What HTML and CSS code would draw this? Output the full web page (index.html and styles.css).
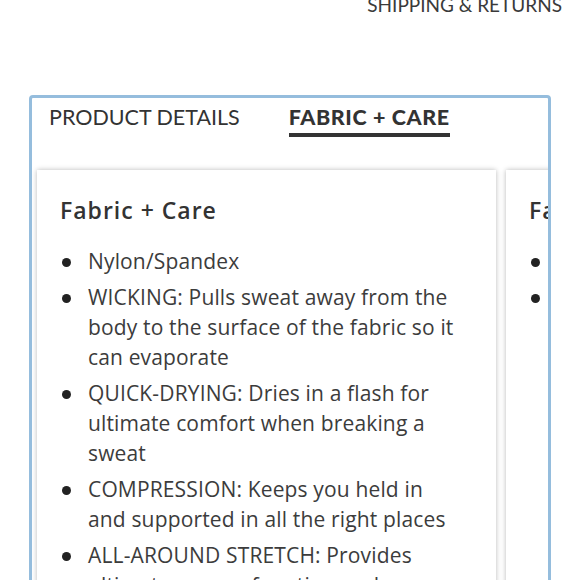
FILE: index.html
```html
<!DOCTYPE html>
<html>
<head>
<meta charset="utf-8">
<link rel="stylesheet" href="styles.css">
</head>
<body>
<div class="top"><span class="ship">SHIPPING &amp; RETURNS</span></div>
<div class="panel">
  <div class="tabs">
    <span class="tab">PRODUCT DETAILS</span>
    <span class="tab active">FABRIC + CARE</span>
  </div>
  <div class="cards">
    <div class="card">
      <h2 class="card-title">Fabric + Care</h2>
      <ul class="list">
        <li>Nylon/Spandex</li>
        <li>WICKING: Pulls sweat away from the body to the surface of the fabric so it can evaporate</li>
        <li>QUICK-DRYING: Dries in a flash for ultimate comfort when breaking a sweat</li>
        <li>COMPRESSION: Keeps you held in and supported in all the right places</li>
        <li>ALL-AROUND STRETCH: Provides ultimate range of motion and mobility</li>
      </ul>
    </div>
    <div class="card">
      <h2 class="card-title">Fabric + Care</h2>
      <ul class="list">
        <li>Machine wash cold</li>
        <li>Tumble dry low</li>
      </ul>
    </div>
  </div>
</div>
</body>
</html>
```
FILE: styles.css
```css
html, body {
  margin: 0;
  padding: 0;
  background: #ffffff;
  overflow: hidden;
}
body {
  font-family: Lato, "Open Sans", sans-serif;
  color: #333333;
  width: 580px;
  height: 580px;
}
.top {
  height: 95px;
  display: flex;
  justify-content: flex-end;
  align-items: flex-start;
  padding-right: 18px;
  box-sizing: border-box;
}
.ship {
  font-size: 19px;
  line-height: 20px;
  margin-top: -5px;
  font-weight: 400;
  color: #3a3a3a;
}
.panel {
  margin-left: 29px;
  width: 522px;
  height: 520px;
  box-sizing: border-box;
  border: 3px solid #95bddd;
  border-radius: 4px;
  overflow: hidden;
}
.tabs {
  display: flex;
  gap: 49px;
  padding: 4px 0 0 17px;
  height: 66px;
  box-sizing: border-box;
}
.tab {
  font-size: 21.5px;
  line-height: 30px;
  height: 30px;
  color: #333;
  font-weight: 400;
}
.tab.active {
  font-weight: 900;
  letter-spacing: 0.6px;
  border-bottom: 4px solid #333;
  height: 31px;
}
.cards {
  display: flex;
  gap: 10px;
  margin-left: 5px;
  padding-top: 6px;
}
.card {
  flex: 0 0 459px;
  height: 460px;
  box-sizing: border-box;
  padding: 23px 23px 0 23px;
  background: #fff;
  box-shadow: 0 0 5px rgba(0,0,0,0.28);
}
.card-title {
  margin: 0 0 19px 0;
  font-family: "Open Sans", sans-serif;
  font-size: 23px;
  line-height: 34px;
  font-weight: 600;
  letter-spacing: 1px;
  color: #333;
}
.list {
  margin: 0;
  padding: 0 10px 0 0;
  list-style: none;
  font-family: "Open Sans", sans-serif;
  font-size: 21px;
  line-height: 30px;
  letter-spacing: 0.15px;
  color: #3c3c3c;
}
.list li {
  position: relative;
  margin-bottom: 6px;
  padding-left: 28px;
}
.list li::before {
  content: "";
  position: absolute;
  left: 2px;
  top: 12px;
  width: 9px;
  height: 9px;
  border-radius: 50%;
  background: #222;
}
```
